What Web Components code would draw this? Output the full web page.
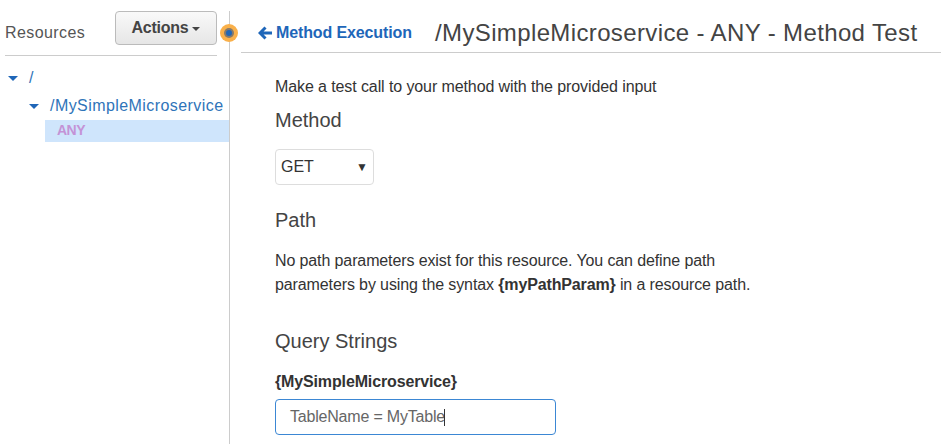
<!DOCTYPE html>
<html>
<head>
<meta charset="utf-8">
<title>Method Test</title>
<style>
  html, body { margin: 0; padding: 0; background: #fff; }
  body { font-family: "Liberation Sans", Arial, sans-serif; color: #333; width: 941px; height: 444px; overflow: hidden; }
  api-console { display: flex; }
</style>
</head>
<body>
<api-console>
  <resource-panel slot="side"></resource-panel>
  <test-panel slot="main"></test-panel>
</api-console>

<script>
class ApiConsole extends HTMLElement {
  connectedCallback() {
    this.attachShadow({ mode: 'open' });
    this.shadowRoot.innerHTML = `
      <style>
        :host { display: flex; height: 444px; padding-top: 11px; box-sizing: border-box; position: relative; }
        .side { width: 230px; box-sizing: border-box; border-right: 1px solid #ccc; flex: none; }
        .main { flex: 1; min-width: 0; }
        .handle {
          position: absolute; left: 220px; top: 24px;
          width: 18px; height: 18px; border-radius: 50%;
          background: #f9b04a;
          display: flex; align-items: center; justify-content: center;
        }
        .handle i { width: 6px; height: 6px; border-radius: 50%; background: #1f66b8; box-shadow: 0 0 0 2px #87796a; }
      </style>
      <div class="side"><slot name="side"></slot></div>
      <div class="main"><slot name="main"></slot></div>
      <div class="handle"><i></i></div>
    `;
  }
}

class ResourcePanel extends HTMLElement {
  connectedCallback() {
    this.attachShadow({ mode: 'open' });
    this.shadowRoot.innerHTML = `
      <style>
        :host { display: block; font-size: 16px; }
        .head {
          display: flex; align-items: center; justify-content: space-between;
          margin: 0 12px 0 5px; height: 44px;
          border-bottom: 1px solid #ccc;
        }
        .head span { color: #555; letter-spacing: .42px; }
        .btn {
          width: 102px; height: 34px; box-sizing: border-box; align-self: flex-start;
          border: 1px solid #bbb; border-radius: 4px;
          background: linear-gradient(#f9f9f9, #e6e6e6);
          display: flex; align-items: center; justify-content: center; gap: 4px;
          font-weight: bold; color: #444; font-size: 16px; padding-bottom: 1px; letter-spacing: -.25px;
        }
        .btn b { width: 0; height: 0; border: 4px solid transparent; border-top-color: #444; border-bottom: 0; margin-top: 3px; }
        .tree { padding-top: 8px; }
        .row { display: flex; align-items: center; height: 28px; color: #2f74b9; letter-spacing: .43px; }
        .row b { width: 0; height: 0; border: 5px solid transparent; border-top: 5px solid #1f66b8; border-bottom: 0; flex: none; }
        .r1 { padding-left: 8px; } .r1 b { margin-right: 11px; }
        .r2 { padding-left: 29px; } .r2 b { margin-right: 11px; }
        .any {
          margin-left: 45px; height: 22px; line-height: 21px; background: #cfe5fc;
          color: #c493d6; font-weight: bold; font-size: 14px; padding-left: 12px; letter-spacing: -.5px;
        }
      </style>
      <div class="head"><span>Resources</span><div class="btn">Actions<b></b></div></div>
      <div class="tree">
        <div class="row r1"><b></b>/</div>
        <div class="row r2"><b></b>/MySimpleMicroservice</div>
        <div class="any">ANY</div>
      </div>
    `;
  }
}

class TestPanel extends HTMLElement {
  connectedCallback() {
    this.attachShadow({ mode: 'open' });
    this.shadowRoot.innerHTML = `
      <style>
        :host { display: block; font-size: 16px; }
        .bar {
          margin-left: 11px; height: 42px; border-bottom: 1px solid #ccc;
          display: flex; align-items: center; padding-left: 17px; padding-top: 3px; box-sizing: border-box;
        }
        .back { display: flex; align-items: center; gap: 4px; color: #1e66b9; font-weight: bold; width: 177px; letter-spacing: -.12px; }
        h1 { margin: 0; font-size: 24px; font-weight: normal; color: #444; white-space: nowrap; letter-spacing: .37px; }
        .body { padding: 0 0 0 45px; letter-spacing: -.1px; }
        p { margin: 0; font-size: 16px; line-height: 24px; }
        h2 { margin: 0; font-size: 20px; font-weight: normal; color: #444; line-height: 24px; letter-spacing: 0; }
        .intro { margin-top: 22px; }
        .method { margin-top: 9px; }
        .select {
          margin-top: 17px; width: 99px; height: 36px; box-sizing: border-box;
          border: 1px solid #ddd; border-radius: 4px; padding: 0 5px;
          display: flex; align-items: center; justify-content: space-between; color: #333; letter-spacing: 0;
        }
        .select span { font-size: 12px; color: #333; }
        .path { margin-top: 23px; }
        .desc { margin-top: 17px; width: 500px; letter-spacing: -.115px; }
        .desc b { letter-spacing: -.14px; }
        .qs { margin-top: 32px; }
        label { display: block; margin-top: 17px; font-weight: bold; line-height: 24px; letter-spacing: -.14px; }
        .input {
          margin-top: 5px; width: 281px; height: 36px; box-sizing: border-box;
          border: 1px solid #3b87d4; border-radius: 4px; padding-left: 14px;
          display: flex; align-items: center; color: #666; letter-spacing: -.2px;
        }
        .input i { width: 1px; height: 17px; background: #333; margin-left: -1px; }
      </style>
      <div class="bar">
        <div class="back">
          <svg width="14" height="14" viewBox="0 0 14 14"><path d="M7.500 1.500 2 7l5.500 5.500M3 7h11" fill="none" stroke="#1e66b9" stroke-width="3"/></svg>
          <span>Method Execution</span>
        </div>
        <h1>/MySimpleMicroservice - ANY - Method Test</h1>
      </div>
      <div class="body">
        <p class="intro">Make a test call to your method with the provided input</p>
        <h2 class="method">Method</h2>
        <div class="select">GET<span>▼</span></div>
        <h2 class="path">Path</h2>
        <p class="desc">No path parameters exist for this resource. You can define path parameters by using the syntax <b>{myPathParam}</b> in a resource path.</p>
        <h2 class="qs">Query Strings</h2>
        <label>{MySimpleMicroservice}</label>
        <div class="input">TableName = MyTable<i></i></div>
      </div>
    `;
  }
}

customElements.define('api-console', ApiConsole);
customElements.define('resource-panel', ResourcePanel);
customElements.define('test-panel', TestPanel);
</script>
</body>
</html>
